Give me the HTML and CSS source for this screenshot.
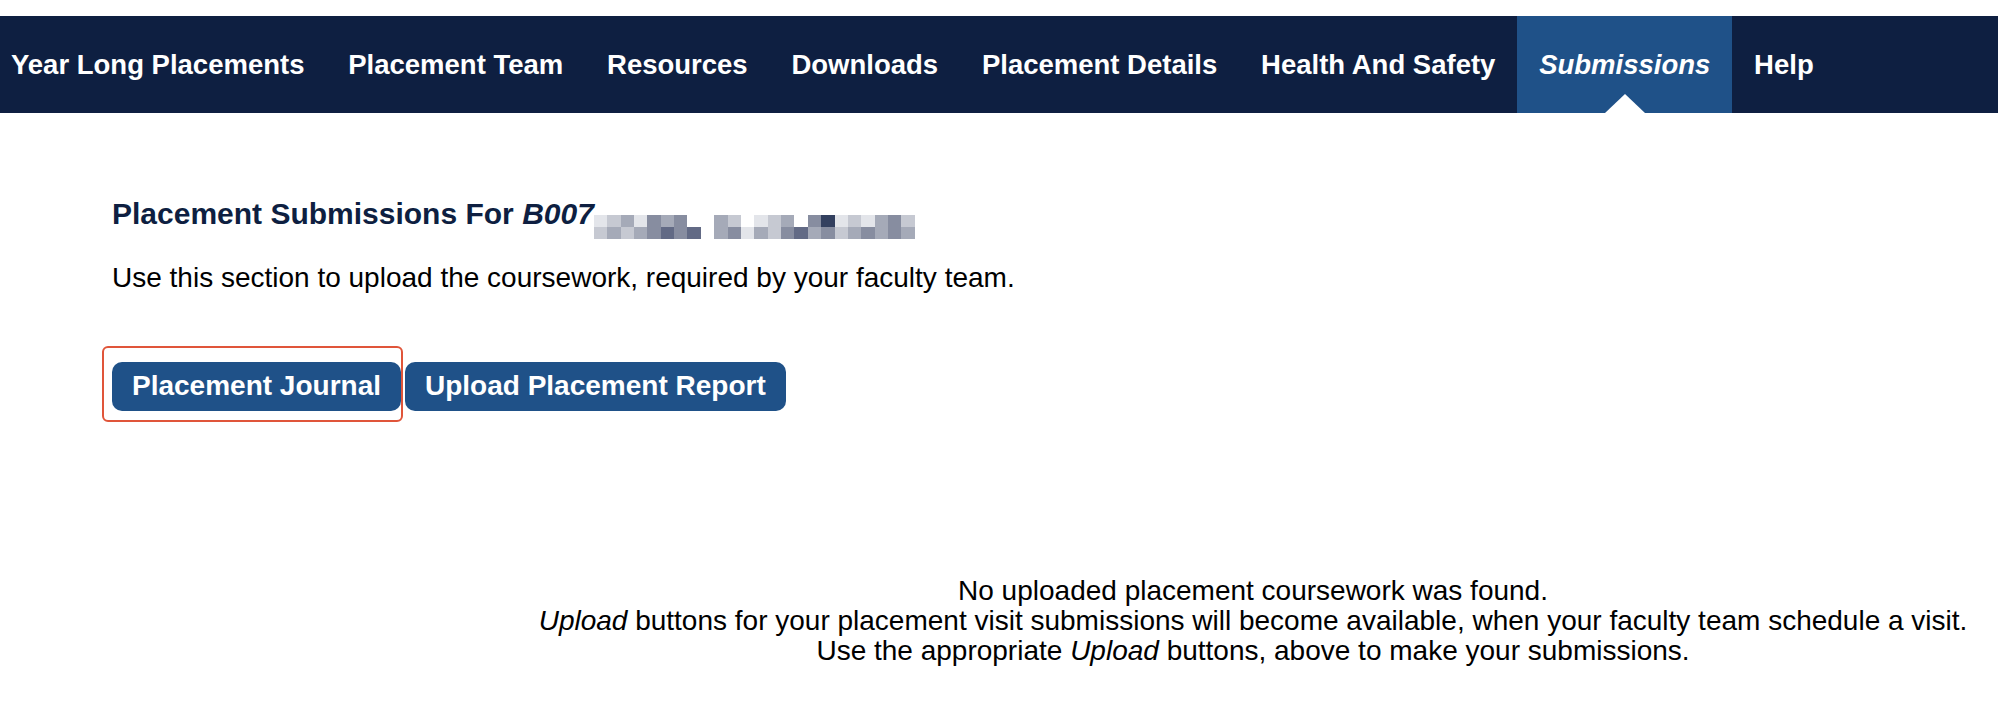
FILE: index.html
```html
<!DOCTYPE html>
<html lang="en">
<head>
<meta charset="utf-8">
<title>Placement Submissions</title>
<link rel="stylesheet" href="styles.css">
</head>
<body>
<nav class="topnav">
  <a class="nav-link" href="#">Year Long Placements</a>
  <a class="nav-link" href="#">Placement Team</a>
  <a class="nav-link" href="#">Resources</a>
  <a class="nav-link" href="#">Downloads</a>
  <a class="nav-link" href="#">Placement Details</a>
  <a class="nav-link" href="#">Health And Safety</a>
  <a class="nav-link active" href="#">Submissions</a>
  <a class="nav-link" href="#">Help</a>
</nav>
<main class="content">
  <h2 class="page-title">Placement Submissions For <em>B007</em><span class="redacted" aria-hidden="true"><i class="a"></i><i class="b"></i><i class="c"></i><i class="a"></i><i class="d"></i><i class="c"></i><i class="d"></i><i class="w"></i><i class="w"></i><i class="c"></i><i class="b"></i><i class="w"></i><i class="a"></i><i class="b"></i><i class="c"></i><i class="w"></i><i class="d"></i><i class="f"></i><i class="a"></i><i class="b"></i><i class="a"></i><i class="c"></i><i class="d"></i><i class="b"></i><i class="b"></i><i class="c"></i><i class="b"></i><i class="c"></i><i class="d"></i><i class="e"></i><i class="d"></i><i class="e"></i><i class="w"></i><i class="c"></i><i class="d"></i><i class="a"></i><i class="c"></i><i class="b"></i><i class="d"></i><i class="e"></i><i class="c"></i><i class="d"></i><i class="b"></i><i class="c"></i><i class="d"></i><i class="c"></i><i class="d"></i><i class="c"></i></span></h2>
  <p class="intro">Use this section to upload the coursework, required by your faculty team.</p>
  <div class="actions">
    <span class="highlight"><button class="btn" type="button">Placement Journal</button></span>
    <button class="btn" type="button">Upload Placement Report</button>
  </div>
  <div class="notice">
    <p class="notice-line">No uploaded placement coursework was found.</p>
    <p class="notice-line"><em>Upload</em> buttons for your placement visit submissions will become available, when your faculty team schedule a visit.</p>
    <p class="notice-line">Use the appropriate <em>Upload</em> buttons, above to make your submissions.</p>
  </div>
</main>
</body>
</html>
```
FILE: styles.css
```css
html, body {
  margin: 0;
  padding: 0;
  background: #ffffff;
}

body {
  font-family: "Liberation Sans", Arial, Helvetica, sans-serif;
  color: #000000;
}

.topnav {
  margin-top: 16px;
  height: 97px;
  background: #0e1f41;
  display: flex;
  align-items: stretch;
}

.nav-link {
  position: relative;
  display: flex;
  align-items: center;
  padding: 0 21.9px;
  color: #ffffff;
  font-size: 27.5px;
  font-weight: bold;
  text-decoration: none;
  white-space: nowrap;
}

.nav-link:first-child {
  padding-left: 11px;
}

.nav-link.active {
  background: #1f5188;
  font-style: italic;
}

.nav-link.active::after {
  content: "";
  position: absolute;
  left: 50%;
  bottom: 0;
  transform: translateX(-50%);
  width: 0;
  height: 0;
  border-left: 20px solid transparent;
  border-right: 20px solid transparent;
  border-bottom: 19px solid #ffffff;
}

.content {
  padding-left: 112px;
}

.page-title {
  margin: 83px 0 0;
  font-size: 30px;
  line-height: 36px;
  font-weight: bold;
  color: #0e1f41;
  white-space: nowrap;
}

.page-title em {
  font-style: italic;
}

.redacted {
  display: inline-grid;
  grid-template-columns: repeat(24, 1fr);
  grid-template-rows: 12px 12px;
  width: 321px;
  height: 24px;
  vertical-align: -3px;
}

.redacted i {
  display: block;
}

.redacted .w { background: #ffffff; }
.redacted .a { background: #e3e5ea; }
.redacted .b { background: #c6c9d2; }
.redacted .c { background: #a5aab8; }
.redacted .d { background: #878da0; }
.redacted .e { background: #626a85; }
.redacted .f { background: #33405f; }

.intro {
  margin: 23px 0 0;
  font-size: 28px;
  line-height: 32px;
}

.actions {
  display: flex;
  align-items: flex-start;
  gap: 4px;
  margin-top: 68px;
}

.highlight {
  position: relative;
  display: flex;
}

.highlight::after {
  content: "";
  position: absolute;
  top: -16px;
  left: -10px;
  right: -2px;
  bottom: -11px;
  border: 2px solid #e0553a;
  border-radius: 6px;
  pointer-events: none;
}

.btn {
  margin: 0;
  padding: 7px 20px 9px;
  border: 0;
  border-radius: 10px;
  background: #1f5188;
  color: #ffffff;
  font-family: "Liberation Sans", Arial, Helvetica, sans-serif;
  font-size: 28px;
  line-height: 33px;
  font-weight: bold;
  white-space: nowrap;
  cursor: pointer;
}

.notice {
  margin: 165px 0 0 396px;
  text-align: center;
  font-size: 28px;
  line-height: 30px;
}

.notice-line {
  margin: 0;
  white-space: nowrap;
}
```
